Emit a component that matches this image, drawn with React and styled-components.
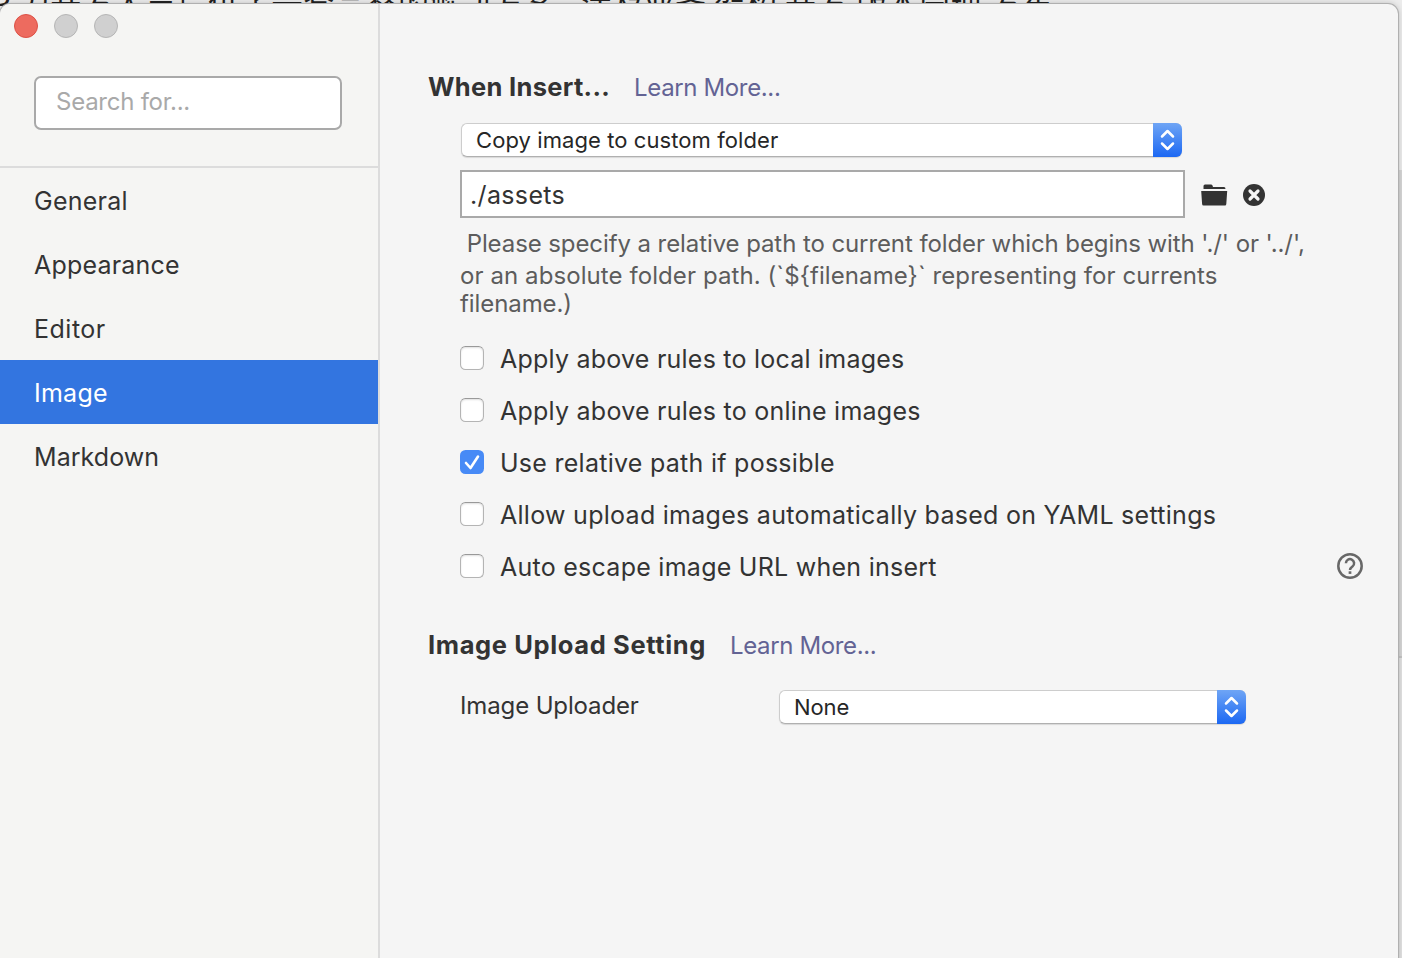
import React from "react";
import styled, { createGlobalStyle } from "styled-components";

const Global = createGlobalStyle`
  * { box-sizing: border-box; }
  body { margin: 0; overflow: hidden; background: #e2e2e2; color: #333; font-family: Inter, "Noto Sans", sans-serif; }
`;

const Desktop = styled.div`
  position: relative;
  width: 1402px;
  height: 958px;
  padding-top: 4px;
  overflow: hidden;
  background: linear-gradient(#ececec 0 170px, #d6d6d6 170px 656px, #c4c4c4 656px 658px, #e2e2e2 658px);
`;

const Backdrop = styled.div`
  position: absolute;
  left: -9px;
  top: -14px;
  white-space: pre;
  color: #222;
  letter-spacing: 0.6px;
  font: 31px/32px "Noto Sans CJK SC", sans-serif;
`;

const Window = styled.div`
  position: relative;
  display: flex;
  width: 1398px;
  height: 970px;
  border-radius: 10px;
  overflow: hidden;
  background: #f5f5f5;
  box-shadow: 0 0 0 1px #b0b0b0, 0 0 6px rgba(0, 0, 0, 0.25);
`;

const Sidebar = styled.aside`
  width: 380px;
  flex: none;
  border-right: 2px solid #dcdcdc;
  background: #f5f5f3;
`;

const SidebarTop = styled.div`
  height: 164px;
  padding: 10px 14px 0;
  border-bottom: 2px solid #dcdcdc;
`;

const Lights = styled.div`
  display: flex;
  gap: 16px;
`;

const Light = styled.span`
  width: 24px;
  height: 24px;
  border-radius: 50%;
  border: 1px solid ${(p) => (p.$close ? "#dc5146" : "#b5b5b5")};
  background: ${(p) => (p.$close ? "#ed6b5f" : "#d0d0d0")};
`;

const Search = styled.div`
  display: flex;
  align-items: center;
  width: 308px;
  height: 54px;
  margin: 38px 0 0 20px;
  padding: 0 0 4px 20px;
  border: 2px solid #a9a9a9;
  border-radius: 7px;
  background: #fff;
  color: #a9a9a9;
`;

const Text = styled.span`
  font-size: ${(p) => p.$size || 25}px;
  font-weight: ${(p) => p.$weight || 400};
  letter-spacing: ${(p) => p.$track || 0}px;
  white-space: pre;
`;

const Nav = styled.nav`
  display: flex;
  flex-direction: column;
`;

const NavItem = styled.div`
  display: flex;
  align-items: center;
  height: 64px;
  padding: 2px 0 0 34px;
  background: ${(p) => (p.$active ? "#3375e0" : "transparent")};
  color: ${(p) => (p.$active ? "#fff" : "#333")};
`;

const Content = styled.main`
  flex: 1;
  padding: 66px 34px 0 48px;
`;

const Heading = styled.div`
  display: flex;
  align-items: baseline;
  gap: 24px;
  height: 34px;
  line-height: 34px;
`;

const Link = styled(Text)`
  color: #636394;
`;

const Section = styled.div`
  display: flex;
  flex-direction: column;
  padding-left: 32px;
`;

const InsertSection = styled(Section)`
  padding-top: 19px;
  padding-bottom: 35px;
`;

const SelectBox = styled.div`
  display: flex;
  justify-content: space-between;
  align-items: center;
  width: ${(p) => p.$width}px;
  height: 34px;
  margin-left: ${(p) => p.$inset || 0}px;
  padding-left: 14px;
  border: 1px solid #cdcdcd;
  border-right: 0;
  border-bottom-color: #b0b0b0;
  border-radius: 6px;
  background: #fff;
  color: #262626;
  box-shadow: 0 1px 1px rgba(0, 0, 0, 0.12);
`;

const Stepper = styled.span`
  display: flex;
  width: 29px;
  height: 34px;
  border-radius: 0 6px 6px 0;
  background: linear-gradient(#6fa5f5, #1c68f3);
`;

const PathRow = styled.div`
  display: flex;
  align-items: center;
  margin-top: 13px;
`;

const PathInput = styled.div`
  display: flex;
  align-items: center;
  width: 725px;
  height: 48px;
  padding: 2px 0 0 8px;
  border: 2px solid #a9a9a9;
  background: #fff;
`;

const FolderIcon = styled.svg`
  margin: 2px 0 0 16px;
`;

const ClearIcon = styled.svg`
  margin: 2px 0 0 15px;
`;

const Hint = styled.div`
  display: flex;
  flex-direction: column;
  margin-top: 10px;
  color: #5c5c5c;
`;

const HintLine = styled(Text)`
  height: ${(p) => p.$height}px;
  line-height: 32px;
`;

const Options = styled.div`
  display: flex;
  flex-direction: column;
  margin-top: 13px;
`;

const Option = styled.div`
  display: flex;
  align-items: center;
  height: 52px;
`;

const Check = styled.span`
  display: flex;
  width: 24px;
  height: 24px;
  margin: 0 16px 2px 0;
  border-radius: 5.5px;
  border: ${(p) => (p.$on ? "0" : "1px solid #b4b4b4")};
  border-top-color: #999;
  background: ${(p) => (p.$on ? "#478af6" : "#fff")};
  box-shadow: ${(p) => (p.$on ? "none" : "inset 0 1px 2px rgba(0,0,0,.13)")};
`;

const HelpIcon = styled.svg`
  margin: 0 1px 2px auto;
`;

const UploadRow = styled.div`
  display: flex;
  align-items: center;
  margin-top: 28px;
`;

const UploadLabel = styled.div`
  width: 319px;
  padding-bottom: 3px;
`;

function Select({ width, inset, track, children }) {
  return (
    <SelectBox $width={width} $inset={inset}>
      <Text $size={22} $track={track}>{children}</Text>
      <Stepper>
        <svg width="29" height="34" fill="none" stroke="#fff" strokeWidth="2.5" strokeLinecap="round" strokeLinejoin="round">
          <path d="M9 13.5l5.5-5.5 5.5 5.5M9 20.5l5.5 5.5 5.5-5.5" />
        </svg>
      </Stepper>
    </SelectBox>
  );
}

const nav = [["General", 0.24], ["Appearance", 0.2], ["Editor", 0.5], ["Image", 0.25], ["Markdown", 0.05]];
const options = [
  ["Apply above rules to local images", 0.23],
  ["Apply above rules to online images", 0.24],
  ["Use relative path if possible", 0.27],
  ["Allow upload images automatically based on YAML settings", 0.28],
  ["Auto escape image URL when insert", 0.26],
];

export default function App() {
  return (
    <Desktop>
      <Global />
      <Backdrop>P 为开发人员提供了一套完整的解决方案,  涉及业务 架构 开发 版本管理 发布</Backdrop>
      <Window>
        <Sidebar>
          <SidebarTop>
            <Lights><Light $close /><Light /><Light /></Lights>
            <Search><Text $size={24} $track={-0.25}>Search for...</Text></Search>
          </SidebarTop>
          <Nav>
            {nav.map(([name, track]) => (
              <NavItem key={name} $active={name === "Image"}><Text $track={track}>{name}</Text></NavItem>
            ))}
          </Nav>
        </Sidebar>
        <Content>
          <Heading>
            <Text $size={25.5} $weight={700} $track={0.31}>When Insert...</Text>
            <Link $size={24} $track={-0.36}>Learn More...</Link>
          </Heading>
          <InsertSection>
            <Select width={721} inset={1} track={0.08}>Copy image to custom folder</Select>
            <PathRow>
              <PathInput><Text $track={0.35}>./assets</Text></PathInput>
              <FolderIcon width="27" height="22" fill="#333">
                <path d="M2.5 5V2Q2.5 .5 4 .5H10Q11 .5 11.5 1.5L12 3H23Q24.5 3 24.5 5Z" />
                <path d="M.2 7H26.2L25.3 20Q25.2 21.5 24 21.5H2.5Q1.2 21.5 1.1 20Z" />
              </FolderIcon>
              <ClearIcon width="22" height="22">
                <circle cx="11" cy="11" r="11" fill="#333" />
                <path d="M7 7l8 8M15 7l-8 8" stroke="#f5f5f5" strokeWidth="3.2" strokeLinecap="round" />
              </ClearIcon>
            </PathRow>
            <Hint>
              <HintLine $size={24} $height={32} $track={-0.09}> Please specify a relative path to current folder which begins with './' or '../',</HintLine>
              <HintLine $size={24} $height={28} $track={0.085}>{"or an absolute folder path. (`${filename}` representing for currents"}</HintLine>
              <HintLine $size={24} $height={32} $track={-0.08}>filename.)</HintLine>
            </Hint>
            <Options>
              {options.map(([label, track], i) => (
                <Option key={label}>
                  <Check $on={i === 2}>
                    {i === 2 && (
                      <svg width="24" height="24" fill="none" stroke="#fff" strokeWidth="2.6" strokeLinecap="round" strokeLinejoin="round">
                        <path d="M6 13l4.5 5L18 6.5" />
                      </svg>
                    )}
                  </Check>
                  <Text $track={track}>{label}</Text>
                  {i === 4 && (
                    <HelpIcon width="26" height="26" viewBox="0 0 26 26" fill="none" stroke="#686868" strokeWidth="2.5">
                      <circle cx="13" cy="13" r="11.7" />
                      <path d="M8.9 10.2a4.1 4.1 0 1 1 6.7 3.2c-1.5 1.2-2.6 1.8-2.6 3.7" />
                      <path d="M13 18.3v2.6" strokeWidth="2.7" />
                    </HelpIcon>
                  )}
                </Option>
              ))}
            </Options>
          </InsertSection>
          <Heading>
            <Text $size={25.5} $weight={700} $track={0.62}>Image Upload Setting</Text>
            <Link $size={24} $track={-0.36}>Learn More...</Link>
          </Heading>
          <Section>
            <UploadRow>
              <UploadLabel><Text $size={24} $track={-0.13}>Image Uploader</Text></UploadLabel>
              <Select width={467} track={-0.1}>None</Select>
            </UploadRow>
          </Section>
        </Content>
      </Window>
    </Desktop>
  );
}
